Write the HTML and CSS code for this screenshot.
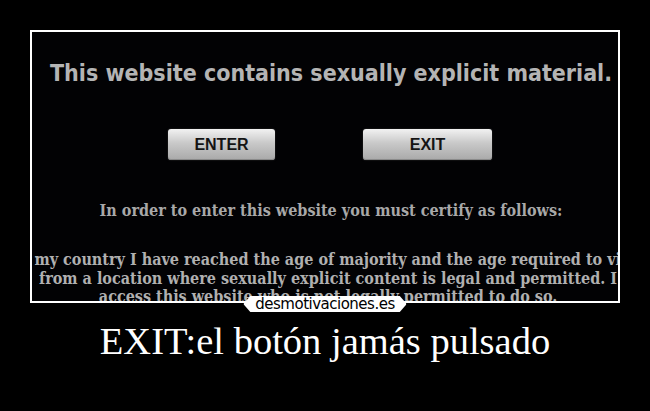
FILE: index.html
```html
<!DOCTYPE html>
<html lang="es">
<head>
  <meta charset="UTF-8">
  <title>EXIT:el botón jamás pulsado</title>
  <link rel="stylesheet" href="styles.css">
</head>
<body>
  <div class="poster">
    <div class="frame">
      <div class="screen">
        <h1 class="warning">This website contains sexually explicit material.</h1>

        <div class="buttons">
          <span class="btn btn-enter">ENTER</span>
          <span class="btn btn-exit">EXIT</span>
        </div>

        <p class="certify">In order to enter this website you must certify as follows:</p>

        <p class="terms">
          <span>in my country I have reached the age of majority and the age required to view</span>
          <span>from a location where sexually explicit content is legal and permitted. I</span>
          <span>access this website who is not legally permitted to do so.</span>
        </p>
      </div>
      <div class="brand">desmotivaciones.es</div>
    </div>

    <h2 class="caption">EXIT:el botón jamás pulsado</h2>
  </div>
</body>
</html>
```

FILE: styles.css
```css
html, body {
  margin: 0;
  background: #000;
}

.poster {
  width: 650px;
  height: 411px;
  padding-top: 30px;
  box-sizing: border-box;
}

/* white border round the picture */
.frame {
  position: relative;
  margin: 0 30px;
  height: 273px;
  border: 2px solid #fff;
  box-sizing: border-box;
}

.screen {
  height: 100%;
  overflow: hidden;
  background: #020204;
  text-align: center;
}

.warning {
  margin: 27px -12px 0 0;
  font-family: "DejaVu Sans Condensed", "DejaVu Sans", sans-serif;
  font-size: 23px;
  font-weight: bold;
  line-height: 28px;
  color: #b4b4b4;
  white-space: nowrap;
}

.buttons {
  display: flex;
  justify-content: center;
  gap: 88px;
  margin-top: 42px;
  margin-left: 10px;
}

.btn {
  height: 31px;
  line-height: 31px;
  border-radius: 3px;
  background: linear-gradient(#f2f2f2, #c9c9c9 45%, #a9a9a9);
  box-shadow: inset 0 -1px 0 #8a8a8a, 0 0 2px #333;
  font-family: "Liberation Sans", Arial, sans-serif;
  font-weight: bold;
  font-size: 16px;
  color: #141414;
}

.btn-enter { width: 107px; }
.btn-exit { width: 129px; }

.certify {
  margin: 41px 0 0 12px;
  font-family: "DejaVu Serif Condensed", "DejaVu Serif", serif;
  font-weight: bold;
  font-size: 16px;
  line-height: 20px;
  color: #a8a8a8;
  white-space: nowrap;
}

.terms {
  margin: 30px -206px 0 -200px;
  font-family: "DejaVu Serif Condensed", "DejaVu Serif", serif;
  font-weight: bold;
  font-size: 16px;
  line-height: 18.5px;
  color: #b0b0b0;
  white-space: nowrap;
}

.terms span {
  display: block;
}

/* site badge sitting on the bottom border */
.brand {
  position: absolute;
  left: 50%;
  bottom: -11px;
  transform: translateX(-50%);
  padding: 0 12px;
  height: 16px;
  line-height: 16px;
  background: #fff;
  clip-path: polygon(7px 0, calc(100% - 7px) 0, 100% 50%, calc(100% - 7px) 100%, 7px 100%, 0 50%);
  font-family: "DejaVu Sans", sans-serif;
  font-size: 15px;
  letter-spacing: -0.5px;
  color: #000;
}

.caption {
  margin: 16px 0 0;
  text-align: center;
  font-family: "Liberation Serif", "Times New Roman", serif;
  font-weight: normal;
  font-size: 38.5px;
  color: #fff;
}
```
